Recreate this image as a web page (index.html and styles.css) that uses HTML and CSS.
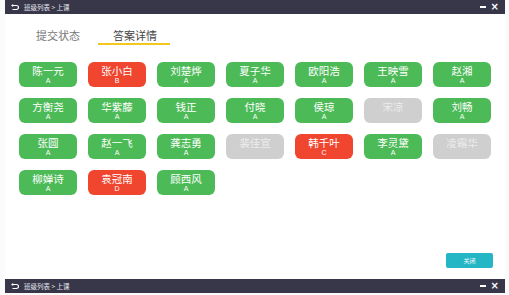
FILE: index.html
```html
<!DOCTYPE html>
<html lang="zh">
<head>
<meta charset="utf-8">
<link rel="stylesheet" href="styles.css">
</head>
<body>
<div class="frame">
  <div class="titlebar">
    <div class="crumbs">
      <svg class="back" width="8" height="7" viewBox="0 0 8 7"><path d="M1.5 1.5 H5.5 A2 2 0 0 1 5.5 5.5 H1.5" fill="none" stroke="#fff" stroke-width="1.2"/><path d="M0 1.5 L2.2 0 V3 Z" fill="#fff"/></svg>
      <span>班级列表 &gt; 上课</span>
    </div>
    <div class="winbtns"><span class="min"></span><span class="close">×</span></div>
  </div>
  <div class="content">
    <div class="tabs">
      <div class="tab">提交状态</div>
      <div class="tab active">答案详情</div>
    </div>
    <div class="grid">
      <div class="stu ok"><span class="nm">陈一元</span><span class="ans">A</span></div>
      <div class="stu bad"><span class="nm">张小白</span><span class="ans">B</span></div>
      <div class="stu ok"><span class="nm">刘楚烨</span><span class="ans">A</span></div>
      <div class="stu ok"><span class="nm">夏子华</span><span class="ans">A</span></div>
      <div class="stu ok"><span class="nm">欧阳浩</span><span class="ans">A</span></div>
      <div class="stu ok"><span class="nm">王映雪</span><span class="ans">A</span></div>
      <div class="stu ok"><span class="nm">赵湘</span><span class="ans">A</span></div>
      <div class="stu ok"><span class="nm">方衡尧</span><span class="ans">A</span></div>
      <div class="stu ok"><span class="nm">华紫藤</span><span class="ans">A</span></div>
      <div class="stu ok"><span class="nm">钱正</span><span class="ans">A</span></div>
      <div class="stu ok"><span class="nm">付晓</span><span class="ans">A</span></div>
      <div class="stu ok"><span class="nm">侯琼</span><span class="ans">A</span></div>
      <div class="stu none"><span class="nm">宋凉</span></div>
      <div class="stu ok"><span class="nm">刘畅</span><span class="ans">A</span></div>
      <div class="stu ok"><span class="nm">张圆</span><span class="ans">A</span></div>
      <div class="stu ok"><span class="nm">赵一飞</span><span class="ans">A</span></div>
      <div class="stu ok"><span class="nm">龚志勇</span><span class="ans">A</span></div>
      <div class="stu none"><span class="nm">裴佳宣</span></div>
      <div class="stu bad"><span class="nm">韩千叶</span><span class="ans">C</span></div>
      <div class="stu ok"><span class="nm">李灵黛</span><span class="ans">A</span></div>
      <div class="stu none"><span class="nm">凌霜华</span></div>
      <div class="stu ok"><span class="nm">柳婵诗</span><span class="ans">A</span></div>
      <div class="stu bad"><span class="nm">袁冠南</span><span class="ans">D</span></div>
      <div class="stu ok"><span class="nm">顾西风</span><span class="ans">A</span></div>
    </div>
    <div class="footer"><button class="closebtn">关闭</button></div>
  </div>
  <div class="titlebar">
    <div class="crumbs">
      <svg class="back" width="8" height="7" viewBox="0 0 8 7"><path d="M1.5 1.5 H5.5 A2 2 0 0 1 5.5 5.5 H1.5" fill="none" stroke="#fff" stroke-width="1.2"/><path d="M0 1.5 L2.2 0 V3 Z" fill="#fff"/></svg>
      <span>班级列表 &gt; 上课</span>
    </div>
    <div class="winbtns"><span class="min"></span><span class="close">×</span></div>
  </div>
</div>
</body>
</html>
```

FILE: styles.css
```css
* { box-sizing: border-box; }
html, body { margin: 0; padding: 0; background: #fbfbfb; }
body {
  font-family: "Noto Sans CJK SC", "Noto Sans", sans-serif;
  width: 509px;
  height: 295px;
  overflow: hidden;
}
.frame {
  margin-left: 5px;
  width: 500px;
}
.titlebar {
  height: 14px;
  background: #38374a;
  display: flex;
  align-items: center;
  justify-content: space-between;
  padding: 0 6px 0 6px;
}
.crumbs {
  display: flex;
  align-items: center;
  gap: 5px;
  color: #e6e6ee;
  font-size: 6.5px;
  line-height: 14px;
}
.back { display: block; }
.winbtns {
  display: flex;
  align-items: center;
  gap: 5px;
  color: #fff;
}
.min {
  display: block;
  width: 6px;
  height: 2px;
  background: #fff;
}
.close {
  font-family: "DejaVu Sans", sans-serif;
  font-size: 10px;
  line-height: 10px;
  font-weight: bold;
}
.content {
  background: #fff;
  height: 265px;
  position: relative;
}
.tabs {
  display: flex;
  padding-left: 31px;
  height: 33px;
}
.tab {
  font-size: 11px;
  line-height: 14px;
  color: #777;
  padding-top: 14px;
  width: 62px;
  height: 31px;
}
.tab.active {
  color: #444;
  width: 72px;
  padding-left: 15px;
  border-bottom: 2px solid #f2c81e;
}
.grid {
  margin-top: 15px;
  padding-left: 14px;
  display: grid;
  grid-template-columns: repeat(7, 58px);
  column-gap: 11px;
  row-gap: 11px;
}
.stu {
  height: 25px;
  border-radius: 6px;
  display: flex;
  flex-direction: column;
  align-items: center;
  padding-top: 3px;
  color: #fff;
}
.stu.ok { background: #4cba57; }
.stu.bad { background: #f0462f; }
.stu.none { background: #cfcfcf; color: #ececec; }
.nm {
  font-size: 10.5px;
  line-height: 12px;
}
.ans {
  font-family: "Liberation Sans", sans-serif;
  font-size: 7px;
  line-height: 8px;
}
.footer {
  position: absolute;
  right: 12px;
  top: 239px;
}
.closebtn {
  display: block;
  width: 47px;
  height: 15px;
  border: 0;
  border-radius: 2px;
  background: #25b6c6;
  color: #fff;
  font-family: "Noto Sans CJK SC", sans-serif;
  font-size: 6px;
  padding: 0;
}
```
